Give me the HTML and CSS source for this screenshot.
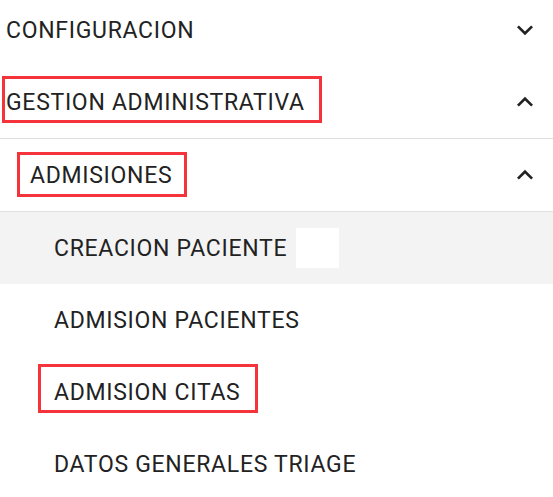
FILE: index.html
```html
<!DOCTYPE html>
<html lang="es">
<head>
<meta charset="utf-8">
<title>Menu</title>
<link rel="stylesheet" href="styles.css">
</head>
<body>
<nav class="menu">
  <div class="row lvl1">
    <span class="label">CONFIGURACION</span>
    <svg class="chev" viewBox="0 0 24 24"><path d="M16.59 8.59L12 13.17 7.41 8.59 6 10l6 6 6-6z"/></svg>
  </div>
  <div class="row lvl1 divided">
    <span class="label hl hl-a">GESTION ADMINISTRATIVA</span>
    <svg class="chev" viewBox="0 0 24 24"><path d="M12 8l-6 6 1.41 1.41L12 10.83l4.59 4.58L18 14z"/></svg>
  </div>
  <div class="row lvl2 divided">
    <span class="label hl hl-b">ADMISIONES</span>
    <svg class="chev" viewBox="0 0 24 24"><path d="M12 8l-6 6 1.41 1.41L12 10.83l4.59 4.58L18 14z"/></svg>
  </div>
  <div class="row lvl3 active">
    <span class="label">CREACION PACIENTE</span><span class="blank"></span>
  </div>
  <div class="row lvl3">
    <span class="label">ADMISION PACIENTES</span>
  </div>
  <div class="row lvl3">
    <span class="label hl hl-c">ADMISION CITAS</span>
  </div>
  <div class="row lvl3">
    <span class="label">DATOS GENERALES TRIAGE</span>
  </div>
</nav>
</body>
</html>
```

FILE: styles.css
```css
html, body {
  margin: 0;
  padding: 0;
  background: #ffffff;
}
body {
  font-family: Roboto, "Liberation Sans", Arial, sans-serif;
  color: #222222;
  overflow: hidden;
}
.menu {
  margin-top: -6px;
  display: flex;
  flex-direction: column;
}
.row {
  height: 72px;
  display: flex;
  align-items: center;
  font-size: 23px;
  letter-spacing: 0.7px;
}
.row.divided {
  border-bottom: 1px solid #e0e0e0;
}
.lvl1 { padding-left: 6px; }
.lvl2 { padding-left: 30px; }
.lvl3 { padding-left: 54px; }
.active {
  background: #f3f3f3;
}
.label {
  position: relative;
  white-space: nowrap;
}
.chev {
  width: 32px;
  height: 32px;
  margin-left: auto;
  margin-right: 12px;
  fill: #212121;
  flex: none;
}
.blank {
  display: inline-block;
  width: 43px;
  height: 40px;
  background: #ffffff;
  margin-left: 9px;
}
.hl::after {
  content: "";
  position: absolute;
  border: 3px solid #f4343a;
}
.hl-a::after { left: -4px; right: -17px; top: -13px; bottom: -7px; }
.hl-b::after { left: -13px; right: -15px; top: -10px; bottom: -8px; }
.hl-c::after { left: -16px; right: -18px; top: -15px; bottom: -7px; }
```
